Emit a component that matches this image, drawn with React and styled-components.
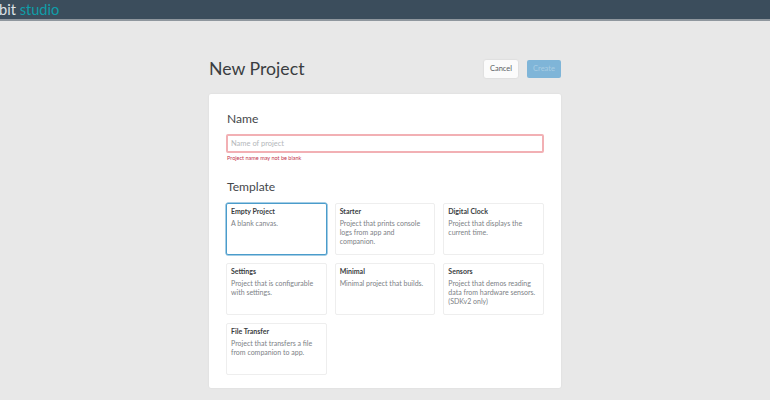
import React from "react";
import styled, { createGlobalStyle } from "styled-components";

const templates = [
  { name: "Empty Project", text: "A blank canvas.", selected: true },
  { name: "Starter", text: "Project that prints console logs from app and companion." },
  { name: "Digital Clock", text: "Project that displays the current time." },
  { name: "Settings", text: "Project that is configurable with settings." },
  { name: "Minimal", text: "Minimal project that builds." },
  { name: "Sensors", text: "Project that demos reading data from hardware sensors. (SDKv2 only)" },
  { name: "File Transfer", text: "Project that transfers a file from companion to app." },
];

const App = () => {
  return (
    <Page>
      <GlobalStyle />
      <Header>
        <Logo>
          bit <span>studio</span>
        </Logo>
      </Header>
      <Main>
        <TitleRow>
          <Title>New Project</Title>
          <Actions>
            <CancelButton>Cancel</CancelButton>
            <CreateButton>Create</CreateButton>
          </Actions>
        </TitleRow>
        <Panel>
          <SectionTitle>Name</SectionTitle>
          <NameInput placeholder="Name of project" />
          <ErrorText>Project name may not be blank</ErrorText>
          <TemplateTitle>Template</TemplateTitle>
          <Grid>
            {templates.map((t) => (
              <Card key={t.name} $selected={t.selected}>
                <CardName>{t.name}</CardName>
                <CardText>{t.text}</CardText>
              </Card>
            ))}
          </Grid>
        </Panel>
      </Main>
    </Page>
  );
};

const GlobalStyle = createGlobalStyle`
  html, body {
    margin: 0;
    height: 100%;
    overflow: hidden;
    background: #e8e8e8;
    font-family: "Lato", "Open Sans", sans-serif;
  }
`;

const Page = styled.div`
  width: 770px;
  height: 400px;
  overflow: hidden;
  background: #e8e8e8;
`;

const Header = styled.div`
  height: 19px;
  background: #3b4d5c;
  border-bottom: 2px solid #8f979e;
  display: flex;
  align-items: center;
`;

const Logo = styled.div`
  font-size: 14.6px;
  line-height: 19px;
  margin-left: -1px;
  color: #dfe3e6;
  & span {
    color: #0f9da8;
  }
`;

const Main = styled.div`
  width: 352px;
  margin: 0 auto;
  padding-top: 31px;
`;

const TitleRow = styled.div`
  height: 42px;
  display: flex;
  justify-content: space-between;
  align-items: flex-start;
`;

const Title = styled.h1`
  margin: 5px 0 0;
  font-size: 17.7px;
  line-height: 24px;
  font-weight: 400;
  color: #3a3d41;
`;

const Actions = styled.div`
  display: flex;
  gap: 9px;
  padding-top: 8px;
`;

const BaseButton = styled.button`
  height: 18px;
  padding: 0;
  border: 0;
  border-radius: 2px;
  font-family: inherit;
  font-size: 7.5px;
  line-height: 18px;
`;

const CancelButton = styled(BaseButton)`
  width: 34px;
  background: #fbfbfb;
  color: #5a5f64;
  box-shadow: 0 0 2px rgba(0, 0, 0, 0.12);
`;

const CreateButton = styled(BaseButton)`
  width: 34px;
  background: #7fb5d8;
  color: #a9cde3;
`;

const Panel = styled.div`
  height: 294px;
  box-sizing: border-box;
  padding: 17px 17px 0;
  background: #fff;
  border-radius: 2px;
  box-shadow: 0 0 2px rgba(0, 0, 0, 0.08);
`;

const SectionTitle = styled.h2`
  margin: 0 0 0 1px;
  font-size: 12.1px;
  line-height: 16px;
  font-weight: 400;
  color: #44474b;
`;

const TemplateTitle = styled(SectionTitle)`
  margin-top: 17px;
`;

const NameInput = styled.input`
  display: block;
  box-sizing: border-box;
  width: 318px;
  height: 19px;
  margin-top: 7px;
  padding: 0 3px;
  border: 2px solid #f2b0b4;
  border-radius: 2px;
  outline: none;
  font-family: inherit;
  font-size: 7.5px;
  color: #333;
  &::placeholder {
    color: #b4b7ba;
  }
`;

const ErrorText = styled.div`
  margin-top: 1px;
  margin-left: 1px;
  font-size: 5.5px;
  line-height: 8px;
  color: #c2334d;
`;

const Grid = styled.div`
  display: grid;
  width: 318px;
  grid-template-columns: repeat(3, 1fr);
  grid-auto-rows: 52px;
  gap: 8px;
  margin-top: 8px;
`;

const Card = styled.div`
  box-sizing: border-box;
  padding: 2px 4px;
  border-radius: 2px;
  border: 1px solid ${(props) => (props.$selected ? "#4a9ccb" : "#eeeeee")};
  box-shadow: ${(props) => (props.$selected ? "0 0 0 0.5px #4a9ccb" : "none")};
`;

const CardName = styled.div`
  font-size: 7px;
  line-height: 10px;
  font-weight: 700;
  color: #3a3d41;
`;

const CardText = styled.div`
  margin-top: 3px;
  font-size: 7px;
  line-height: 9px;
  color: #7d8186;
`;

export default App;
